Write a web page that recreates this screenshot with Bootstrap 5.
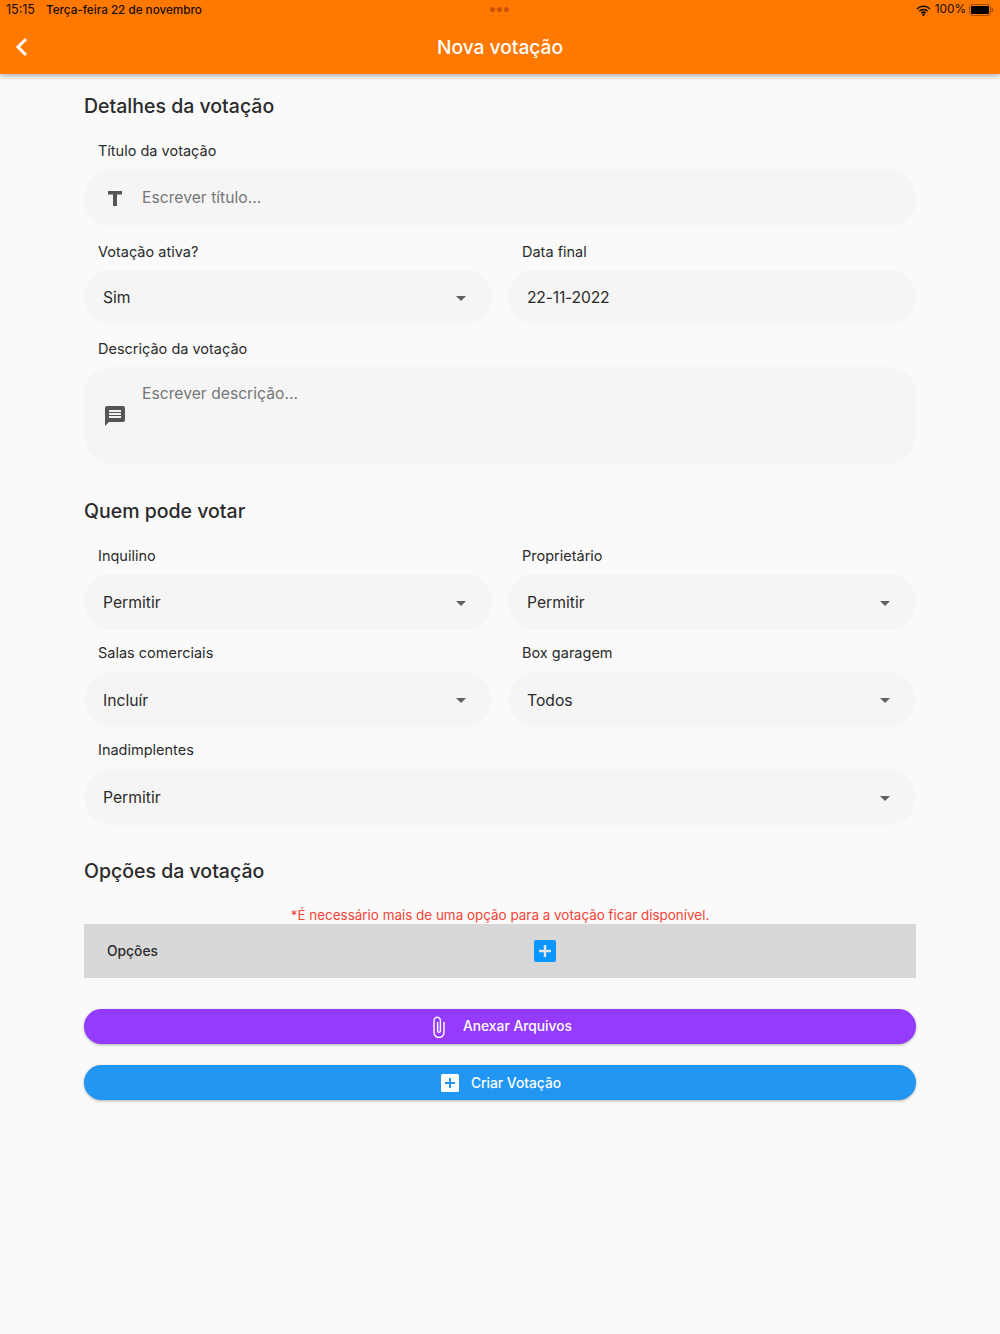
<!DOCTYPE html>
<html lang="pt">

<head>
    <meta charset="UTF-8" />
    <meta name="viewport" content="width=device-width, initial-scale=1" />
    <title>Nova votação</title>
    <link href="https://cdn.jsdelivr.net/npm/bootstrap@5.3.3/dist/css/bootstrap.min.css" rel="stylesheet" />
    <style>
        body {
            background-color: #fafafa;
            color: #2b2b2b;
            font-family: Inter, "Noto Sans", sans-serif;
            height: 1334px;
            overflow: hidden;
        }

        .topo {
            background-color: #ff7900;
            height: 74px;
            box-shadow: 0 2px 5px rgba(0, 0, 0, .3);
            color: #fff;
        }

        .status {
            height: 20px;
            color: #140c00;
            font-size: 12.5px;
            padding: 0 6px;
        }

        .status-data {
            font-size: 11.7px;
            font-weight: 500;
            margin-left: 11px;
        }

        .status-bateria {
            font-size: 11.8px;
            margin-right: -1px;
        }

        .pontos {
            left: 490px;
            top: 7px;
            gap: 2px;
        }

        .pontos i {
            width: 5px;
            height: 5px;
            border-radius: 50%;
            background: #c9530a;
        }

        .barra-app {
            height: 54px;
            padding-top: 2px;
        }

        .barra-app h1 {
            font-size: 19.2px;
            font-weight: 500;
            margin: 0;
        }

        .voltar {
            left: 14px;
            top: 17px;
        }

        .conteudo {
            padding: 0 84px;
        }

        .secao {
            font-size: 19.5px;
            font-weight: 500;
            line-height: 24px;
            margin: 0;
        }

        .secao-1 {
            padding-top: 20px;
            margin-bottom: 24px;
        }

        .secao-2 {
            margin-top: 35px;
            margin-bottom: 24px;
        }

        .secao-3 {
            margin-top: 34px;
            margin-bottom: 23px;
        }

        .rotulo {
            font-size: 14.5px;
            line-height: 18px;
            padding-left: 14px;
            margin: 0 0 9px;
        }

        .rotulo-espaco {
            margin-top: 15px;
        }

        .rotulo-baixo {
            margin-top: 14px;
            margin-bottom: 10px;
        }

        .linha-espaco {
            margin-top: 14px;
        }

        .linha-espaco .rotulo {
            margin-bottom: 10px;
        }

        .campo {
            background: #f5f5f5;
            border-radius: 27px;
            height: 55px;
            padding: 0 19px;
            font-size: 15.7px;
        }

        .campo-titulo {
            height: 58px;
            margin-bottom: 16px;
        }

        .campo-alto {
            height: 56px;
        }

        .campo-desc {
            height: 97px;
        }

        .campo-baixo {
            padding-top: 2px;
        }

        .campo-baixo .seta {
            margin-top: 0;
        }

        .data-valor {
            letter-spacing: -.2px;
        }

        .marcador {
            color: #777;
        }

        .marcador-desc {
            padding-top: 15px;
        }

        .icone-campo {
            width: 24px;
            margin-right: 15px;
            flex: none;
        }

        .seta {
            width: 0;
            height: 0;
            border-left: 5px solid transparent;
            border-right: 5px solid transparent;
            border-top: 5px solid #616161;
            margin-right: 7px;
            margin-top: 2px;
        }

        .aviso {
            color: #f44336;
            font-size: 13.45px;
            line-height: 18px;
        }

        .opcoes {
            background: #d8d8d8;
            height: 54px;
            padding-left: 23px;
            font-size: 13.8px;
            font-weight: 500;
        }

        .opcoes-mais {
            left: 450px;
            top: 16px;
        }

        .botao {
            height: 35px;
            border-radius: 18px;
            border: 0;
            color: #fff;
            font-size: 13.8px;
            font-weight: 500;
            width: 100%;
            box-shadow: 0 1px 3px rgba(0, 0, 0, .3);
        }

        .botao-roxo {
            background: #953bff;
            margin-top: 31px;
            padding-left: 10px;
        }

        .botao-roxo svg {
            margin-right: 17px;
        }

        .botao-azul {
            background: #2196f3;
            margin-top: 21px;
            padding-left: 8px;
            padding-top: 2px;
        }

        .botao-azul svg {
            margin-right: 12px;
        }
    </style>
</head>

<body>

    <header class="topo position-relative">
        <div class="status d-flex justify-content-between align-items-center">
            <span>15:15<span class="status-data">Terça-feira 22 de novembro</span></span>
            <span class="d-flex align-items-center gap-1">
                <svg width="15" height="11" viewBox="0 0 15 11"><path d="M1 4a9.2 9.2 0 0 1 13 0M3.2 6.2a6.1 6.1 0 0 1 8.6 0M5.3 8.2a3.2 3.2 0 0 1 4.4 0" fill="none" stroke="#140c00" stroke-width="1.5"/><circle cx="7.5" cy="9.7" r="1.2" fill="#140c00"/></svg>
                <span class="status-bateria">100%</span>
                <svg width="25" height="12" viewBox="0 0 25 12"><rect x=".5" y=".5" width="21" height="11" rx="2.5" fill="none" stroke="#a85000"/><rect x="2" y="2" width="18" height="8" rx="1" fill="#000"/><rect x="22.5" y="4" width="1.5" height="4" fill="#a85000"/></svg>
            </span>
        </div>
        <div class="pontos position-absolute d-flex"><i></i><i></i><i></i></div>
        <div class="barra-app position-relative d-flex align-items-center justify-content-center">
            <svg class="voltar position-absolute" width="16" height="20" viewBox="0 0 16 20"><path d="M12 2 4 10l8 8" fill="none" stroke="#fff" stroke-width="3"/></svg>
            <h1>Nova votação</h1>
        </div>
    </header>

    <main class="conteudo">
        <h2 class="secao secao-1">Detalhes da votação</h2>

        <p class="rotulo">Título da votação</p>
        <div class="campo campo-titulo d-flex align-items-center">
            <span class="icone-campo">
                <svg class="d-block mx-auto" width="14" height="15" viewBox="0 0 14 15"><path d="M0 0h14v3.4H9v11.6H5V3.4H0z" fill="#555"/></svg>
            </span>
            <span class="marcador">Escrever título...</span>
        </div>

        <div class="row gx-3">
            <div class="col-6">
                <p class="rotulo">Votação ativa?</p>
                <div class="campo d-flex align-items-center justify-content-between">Sim<span class="seta"></span></div>
            </div>
            <div class="col-6">
                <p class="rotulo">Data final</p>
                <div class="campo d-flex align-items-center"><span class="data-valor">22-11-2022</span></div>
            </div>
        </div>

        <p class="rotulo rotulo-espaco">Descrição da votação</p>
        <div class="campo campo-desc d-flex align-items-center">
            <span class="icone-campo">
                <svg class="d-block" width="24" height="24" viewBox="0 0 24 24"><path d="M20 2H4a2 2 0 0 0-2 2v18l4-4h14a2 2 0 0 0 2-2V4a2 2 0 0 0-2-2zM18 14H6v-2h12zm0-3H6V9h12zm0-3H6V6h12z" fill="#555"/></svg>
            </span>
            <span class="marcador marcador-desc align-self-start">Escrever descrição...</span>
        </div>

        <h2 class="secao secao-2">Quem pode votar</h2>

        <div class="row gx-3">
            <div class="col-6">
                <p class="rotulo">Inquilino</p>
                <div class="campo campo-alto campo-baixo d-flex align-items-center justify-content-between">Permitir<span class="seta"></span></div>
            </div>
            <div class="col-6">
                <p class="rotulo">Proprietário</p>
                <div class="campo campo-alto campo-baixo d-flex align-items-center justify-content-between">Permitir<span class="seta"></span></div>
            </div>
        </div>
        <div class="row gx-3 linha-espaco">
            <div class="col-6">
                <p class="rotulo">Salas comerciais</p>
                <div class="campo campo-baixo d-flex align-items-center justify-content-between">Incluír<span class="seta"></span></div>
            </div>
            <div class="col-6">
                <p class="rotulo">Box garagem</p>
                <div class="campo campo-baixo d-flex align-items-center justify-content-between">Todos<span class="seta"></span></div>
            </div>
        </div>
        <p class="rotulo rotulo-baixo">Inadimplentes</p>
        <div class="campo campo-alto campo-baixo d-flex align-items-center justify-content-between">Permitir<span class="seta"></span></div>

        <h2 class="secao secao-3">Opções da votação</h2>

        <p class="aviso text-center m-0">*É necessário mais de uma opção para a votação ficar disponível.</p>
        <div class="opcoes position-relative d-flex align-items-center">
            Opções
            <svg class="opcoes-mais position-absolute" width="22" height="22" viewBox="0 0 22 22"><rect width="22" height="22" rx="2" fill="#0a95ff"/><path d="M11 5v12M5 11h12" stroke="#e4e4e4" stroke-width="2.4"/></svg>
        </div>

        <button class="botao botao-roxo d-flex align-items-center justify-content-center">
            <svg width="14" height="22" viewBox="0 0 14 22"><path d="M12 6v10.5a5 5 0 0 1-10 0V4.5a3.2 3.2 0 0 1 6.4 0V15a1.4 1.4 0 0 1-2.8 0V6" fill="none" stroke="#fff" stroke-width="1.4"/></svg>
            Anexar Arquivos
        </button>
        <button class="botao botao-azul d-flex align-items-center justify-content-center">
            <svg width="18" height="18" viewBox="0 0 18 18"><rect width="18" height="18" rx="1.5" fill="#fff"/><path d="M9 4v10M4 9h10" stroke="#2196f3" stroke-width="2"/></svg>
            Criar Votação
        </button>
    </main>

</body>

</html>
